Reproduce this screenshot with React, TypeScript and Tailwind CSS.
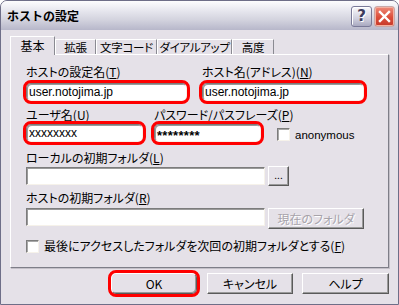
import React from "react";

const inputCls =
  "bg-white border border-t-[#7c7c7c] border-l-[#7c7c7c] border-r-[#f6f2ea] border-b-[#f6f2ea] shadow-[inset_1px_1px_0_#9a9a9a] flex items-center pl-[2px] text-[12px] leading-[14px] text-black";
const redCls = "outline-[3px] outline-solid outline-[#ff0000] rounded-[5px]";
const btnCls =
  "bg-[#e5e1e8] border border-t-white border-l-white border-r-[#5a5a5a] border-b-[#5a5a5a] shadow-[inset_-1px_-1px_0_#9a9a9a] flex items-center justify-center text-[12px] leading-[14px]";
const checkCls =
  "w-[13px] h-[13px] bg-white border border-t-[#7c7c7c] border-l-[#7c7c7c] border-r-[#f6f2ea] border-b-[#f6f2ea] shadow-[inset_1px_1px_0_#a8a8a8]";

function U({ c }: { c: string }) {
  return (
    <>
      (<span className="underline underline-offset-[1px]">{c}</span>)
    </>
  );
}

function Tab({ label, w, selected }: { label: string; w: string; selected?: boolean }) {
  if (selected) {
    return (
      <div
        className={`${w} h-[19px] mb-[-1px] z-10 bg-[#e5e1e8] border-t border-l border-white border-r border-r-[#8a8a92] flex justify-center pt-[2px] text-[12px] leading-[14px] whitespace-nowrap`}
      >
        {label}
      </div>
    );
  }
  return (
    <div
      className={`${w} h-[15px] bg-[#e5e1e8] border-t border-l border-white border-r border-r-[#8a8a92] flex justify-center items-start text-[11.5px] leading-[13px] whitespace-nowrap tracking-[-0.3px]`}
    >
      <span className="pt-[1px]">{label}</span>
    </div>
  );
}

export default function App() {
  return (
    <div className="w-[399px] h-[305px] flex flex-col bg-[#e5e1e8] border border-[#6e6e88] rounded-t-[7px] overflow-hidden text-black font-['Noto_Sans_CJK_JP',sans-serif] [font-feature-settings:'palt']">
      {/* Title bar */}
      <div className="h-[29px] shrink-0 flex items-center pl-[6px] pr-[3px] bg-[linear-gradient(to_bottom,#fdfdfe_0%,#e9e9f0_30%,#d3d3de_65%,#b7b7ca_100%)]">
        <span className="text-[12px] font-bold leading-[14px] [font-feature-settings:normal]">ホストの設定</span>
        <div className="ml-auto flex gap-[2px] mt-[1px]">
          <div className="w-[21px] h-[21px] rounded-[3px] border border-[#7a7a98] bg-[linear-gradient(to_bottom,#fafafc,#d0d0de_60%,#a9a9c0)] flex items-center justify-center shadow-[inset_1px_1px_0_#ffffff]">
            <span className="text-[15px] font-bold leading-[15px] text-[#3c3c5c] font-['DejaVu_Sans',sans-serif] [text-shadow:1px_1px_0_#ffffff]">?</span>
          </div>
          <div className="w-[21px] h-[21px] rounded-[3px] border border-[#c8a8a8] bg-[linear-gradient(to_bottom,#ee8a78,#dc4d3a_55%,#c53a2a)] flex items-center justify-center shadow-[inset_0_0_0_1px_#f4b0a0]">
            <svg width="13" height="13" viewBox="0 0 13 13">
              <path d="M2 2 L11 11 M11 2 L2 11" stroke="#ffffff" strokeWidth="2.4" strokeLinecap="square" />
            </svg>
          </div>
        </div>
      </div>

      {/* Body */}
      <div className="flex-1 flex flex-col pl-[9px] pt-[6px]">
        {/* Tabs */}
        <div className="flex items-end h-[18px]">
          <Tab label="基本" w="w-[45px]" selected />
          <Tab label="拡張" w="w-[41px]" />
          <Tab label="文字コード" w="w-[61px]" />
          <Tab label="ダイアルアップ" w="w-[75px]" />
          <Tab label="高度" w="w-[42px]" />
        </div>

        {/* Panel */}
        <div className="w-[379px] h-[214px] border border-t-white border-l-white border-r-[#7e7e88] border-b-[#7e7e88] shadow-[1px_1px_0_#c4c0c8] flex flex-col pl-[15px] pt-[10px] text-[12px] leading-[14px]">
          {/* Row 1 */}
          <div className="flex">
            <div className="w-[161px] flex flex-col">
              <div className="h-[14px]">
                ホストの設定名<U c="T" />
              </div>
              <div className={`mt-[4px] h-[18px] ${inputCls} ${redCls} font-['Liberation_Sans',sans-serif]`}>user.notojima.jp</div>
            </div>
            <div className="ml-[15px] w-[162px] flex flex-col">
              <div className="h-[14px]">
                ホスト名(アドレス)<U c="N" />
              </div>
              <div className={`mt-[4px] h-[18px] ${inputCls} ${redCls} font-['Liberation_Sans',sans-serif]`}>user.notojima.jp</div>
            </div>
          </div>

          {/* Row 2 */}
          <div className="flex mt-[7px]">
            <div className="w-[117px] flex flex-col">
              <div className="h-[14px]">
                ユーザ名<U c="U" />
              </div>
              <div className={`mt-[2px] h-[18px] ${inputCls} ${redCls} font-['Liberation_Sans',sans-serif]`}>xxxxxxxx</div>
            </div>
            <div className="ml-[11px] w-[107px] flex flex-col">
              <div className="h-[14px] whitespace-nowrap">
                パスワード/パスフレーズ<U c="P" />
              </div>
              <div className={`mt-[2px] h-[18px] ${inputCls} ${redCls}`}>
                <span className="font-['Liberation_Sans',sans-serif] font-bold text-[13px] leading-[13px] pt-[4px] tracking-[0.3px]">********</span>
              </div>
            </div>
            <div className="ml-[16px] mt-[20px] flex items-center h-[13px]">
              <div className={checkCls} />
              <span className="ml-[5px] font-['Liberation_Sans',sans-serif] text-[11.5px] leading-[14px]">anonymous</span>
            </div>
          </div>

          {/* Row 3 */}
          <div className="mt-[9px] h-[14px]">
            ローカルの初期フォルダ<U c="L" />
          </div>
          <div className="flex mt-[1px] items-start">
            <div className={`mt-[1px] w-[239px] h-[18px] ${inputCls}`} />
            <div className={`ml-[3px] w-[21px] h-[20px] ${btnCls}`}>
              <span className="text-[10px] leading-[10px] -mt-[2px]">...</span>
            </div>
          </div>

          {/* Row 4 */}
          <div className="mt-[5px] h-[14px]">
            ホストの初期フォルダ<U c="R" />
          </div>
          <div className="flex mt-[3px] items-start">
            <div className={`w-[239px] h-[18px] ${inputCls}`} />
            <div className={`ml-[3px] w-[96px] h-[21px] ${btnCls} text-[#a7a3aa] [text-shadow:1px_1px_0_#ffffff]`}>
              現在のフォルダ
            </div>
          </div>

          {/* Row 5 */}
          <div className="flex items-center mt-[10px] h-[14px]">
            <div className={checkCls} />
            <span className="ml-[5px] whitespace-nowrap">
              最後にアクセスしたフォルダを次回の初期フォルダとする<U c="F" />
            </span>
          </div>
        </div>

        {/* Buttons */}
        <div className="w-[379px] flex justify-end mt-[5px]">
          <div className={`w-[86px] h-[21px] ${btnCls} ${redCls}`}>OK</div>
          <div className={`ml-[10px] w-[86px] h-[21px] ${btnCls}`}>キャンセル</div>
          <div className={`ml-[9px] w-[87px] h-[21px] ${btnCls}`}>ヘルプ</div>
        </div>
      </div>
    </div>
  );
}
